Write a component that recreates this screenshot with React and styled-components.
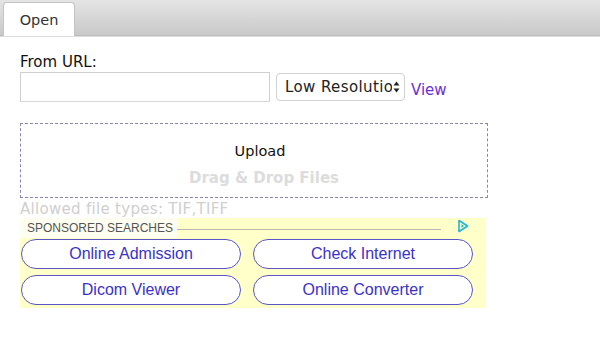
import React from 'react';
import styled, { createGlobalStyle } from 'styled-components';

const GlobalStyle = createGlobalStyle`
    html, body {
        margin: 0;
        padding: 0;
        background: #ffffff;
    }
    body {
        font-family: "DejaVu Sans", Verdana, sans-serif;
        color: #222;
    }
`;

const adLinks = ['Online Admission', 'Check Internet', 'Dicom Viewer', 'Online Converter'];

const App = () => {
    return (
        <Page>
            <GlobalStyle />
            <TabBar>
                <Tab>Open</Tab>
            </TabBar>
            <Content>
                <Label>From URL:</Label>
                <UrlRow>
                    <UrlInput type="text" />
                    <FakeSelect>
                        <SelectText>Low Resolution</SelectText>
                        <SelectArrows width="7" height="12" viewBox="0 0 7 12">
                            <path d="M3.5 0.5 L6.5 4.5 L0.5 4.5 Z" fill="#222" />
                            <path d="M3.5 11.5 L6.5 7.5 L0.5 7.5 Z" fill="#222" />
                        </SelectArrows>
                    </FakeSelect>
                    <ViewLink href="#">View</ViewLink>
                </UrlRow>
                <DropZone>
                    <UploadText>Upload</UploadText>
                    <DragText>Drag &amp; Drop Files</DragText>
                </DropZone>
                <Allowed>Allowed file types: TIF,TIFF</Allowed>
                <AdBox>
                    <AdHeader>
                        <AdLabel>SPONSORED SEARCHES</AdLabel>
                        <AdRule />
                        <AdChoice width="12" height="14" viewBox="0 0 12 14">
                            <path d="M2 1.5 L10.5 7 L2 12.5 Z" fill="none" stroke="#1fb5d6" strokeWidth="1.6" strokeLinejoin="round" />
                            <path d="M4.5 5 L7 7 L4.5 9 Z" fill="#1fb5d6" />
                        </AdChoice>
                    </AdHeader>
                    <AdGrid>
                        {adLinks.map((text) => (
                            <AdButton key={text}>{text}</AdButton>
                        ))}
                    </AdGrid>
                </AdBox>
            </Content>
        </Page>
    );
};

const Page = styled.div`
    width: 600px;
    min-height: 356px;
    background: #fff;
`;

const TabBar = styled.div`
    height: 36px;
    padding: 3px 0 0 3px;
    box-sizing: border-box;
    background: linear-gradient(#e4e4e4, #c9c9c9);
    border-bottom: 1px solid #bcbcbc;
    box-shadow: 0 1px 0 #dedede;
    display: flex;
    align-items: flex-end;
`;

const Tab = styled.div`
    width: 72px;
    height: 34px;
    margin-bottom: -1px;
    box-sizing: border-box;
    background: #fff;
    border: 1px solid #c4c4c4;
    border-bottom: none;
    border-radius: 4px 4px 0 0;
    display: flex;
    align-items: center;
    justify-content: center;
    font-size: 14.5px;
    color: #333;
`;

const Content = styled.div`
    padding: 18px 0 0 20px;
`;

const Label = styled.div`
    font-size: 15px;
    line-height: 16px;
    color: #111;
    margin-bottom: 2px;
`;

const UrlRow = styled.div`
    display: flex;
    align-items: center;
`;

const UrlInput = styled.input`
    width: 250px;
    height: 30px;
    box-sizing: border-box;
    border: 1px solid #cfcfcf;
    border-bottom-color: #d8d8d8;
    padding: 0 4px;
    margin: 0;
    outline: none;
`;

const FakeSelect = styled.div`
    width: 129px;
    height: 28px;
    margin-left: 6px;
    box-sizing: border-box;
    border: 1px solid #d2d2d2;
    border-radius: 4px;
    background: #fff;
    display: flex;
    align-items: center;
    padding: 0 4px 0 8px;
    font-size: 15px;
    letter-spacing: 0.4px;
    color: #222;
`;

const SelectText = styled.span`
    flex: 1;
    min-width: 0;
    overflow: hidden;
    white-space: nowrap;
    text-overflow: clip;
`;

const SelectArrows = styled.svg`
    flex: none;
    margin-left: 1px;
`;

const ViewLink = styled.a`
    margin-left: 6px;
    margin-top: 6px;
    font-size: 15px;
    color: #6a2fd6;
    text-decoration: none;
`;

const DropZone = styled.div`
    width: 468px;
    height: 75px;
    box-sizing: border-box;
    margin-top: 21px;
    border: 1px dashed #8a88a8;
    display: flex;
    flex-direction: column;
    align-items: center;
    padding: 19px 0 0 12px;
`;

const UploadText = styled.div`
    font-size: 14.5px;
    line-height: 16px;
    color: #111;
`;

const DragText = styled.div`
    margin-top: 11px;
    font-size: 15px;
    line-height: 16px;
    font-weight: bold;
    color: #dcdcdc;
    padding-left: 8px;
`;

const Allowed = styled.div`
    font-size: 15px;
    letter-spacing: 0.3px;
    line-height: 17px;
    color: #cfcfcf;
    margin-top: 3px;
`;

const AdBox = styled.div`
    width: 466px;
    height: 90px;
    box-sizing: border-box;
    background: #ffffc9;
    font-family: "Liberation Sans", Arial, sans-serif;
`;

const AdHeader = styled.div`
    height: 20px;
    display: flex;
    align-items: center;
`;

const AdLabel = styled.div`
    background: #fdfdf0;
    height: 20px;
    display: flex;
    align-items: center;
    padding: 0 4px 0 7px;
    font-size: 12px;
    color: #555;
`;

const AdRule = styled.div`
    flex: 1;
    height: 1px;
    background: #b8b8b0;
    margin: 2px 10px 0 0;
    max-width: 264px;
`;

const AdChoice = styled.svg`
    margin-left: auto;
    margin-right: 17px;
    margin-top: -4px;
`;

const AdGrid = styled.div`
    display: grid;
    grid-template-columns: 220px 220px;
    column-gap: 12px;
    row-gap: 6px;
    padding: 1px 0 0 1px;
`;

const AdButton = styled.a`
    height: 30px;
    box-sizing: border-box;
    border: 1.5px solid #5b55c8;
    border-radius: 15px;
    background: #fff;
    display: flex;
    align-items: center;
    justify-content: center;
    font-size: 16px;
    color: #3a32c8;
    cursor: pointer;
`;

export default App;
